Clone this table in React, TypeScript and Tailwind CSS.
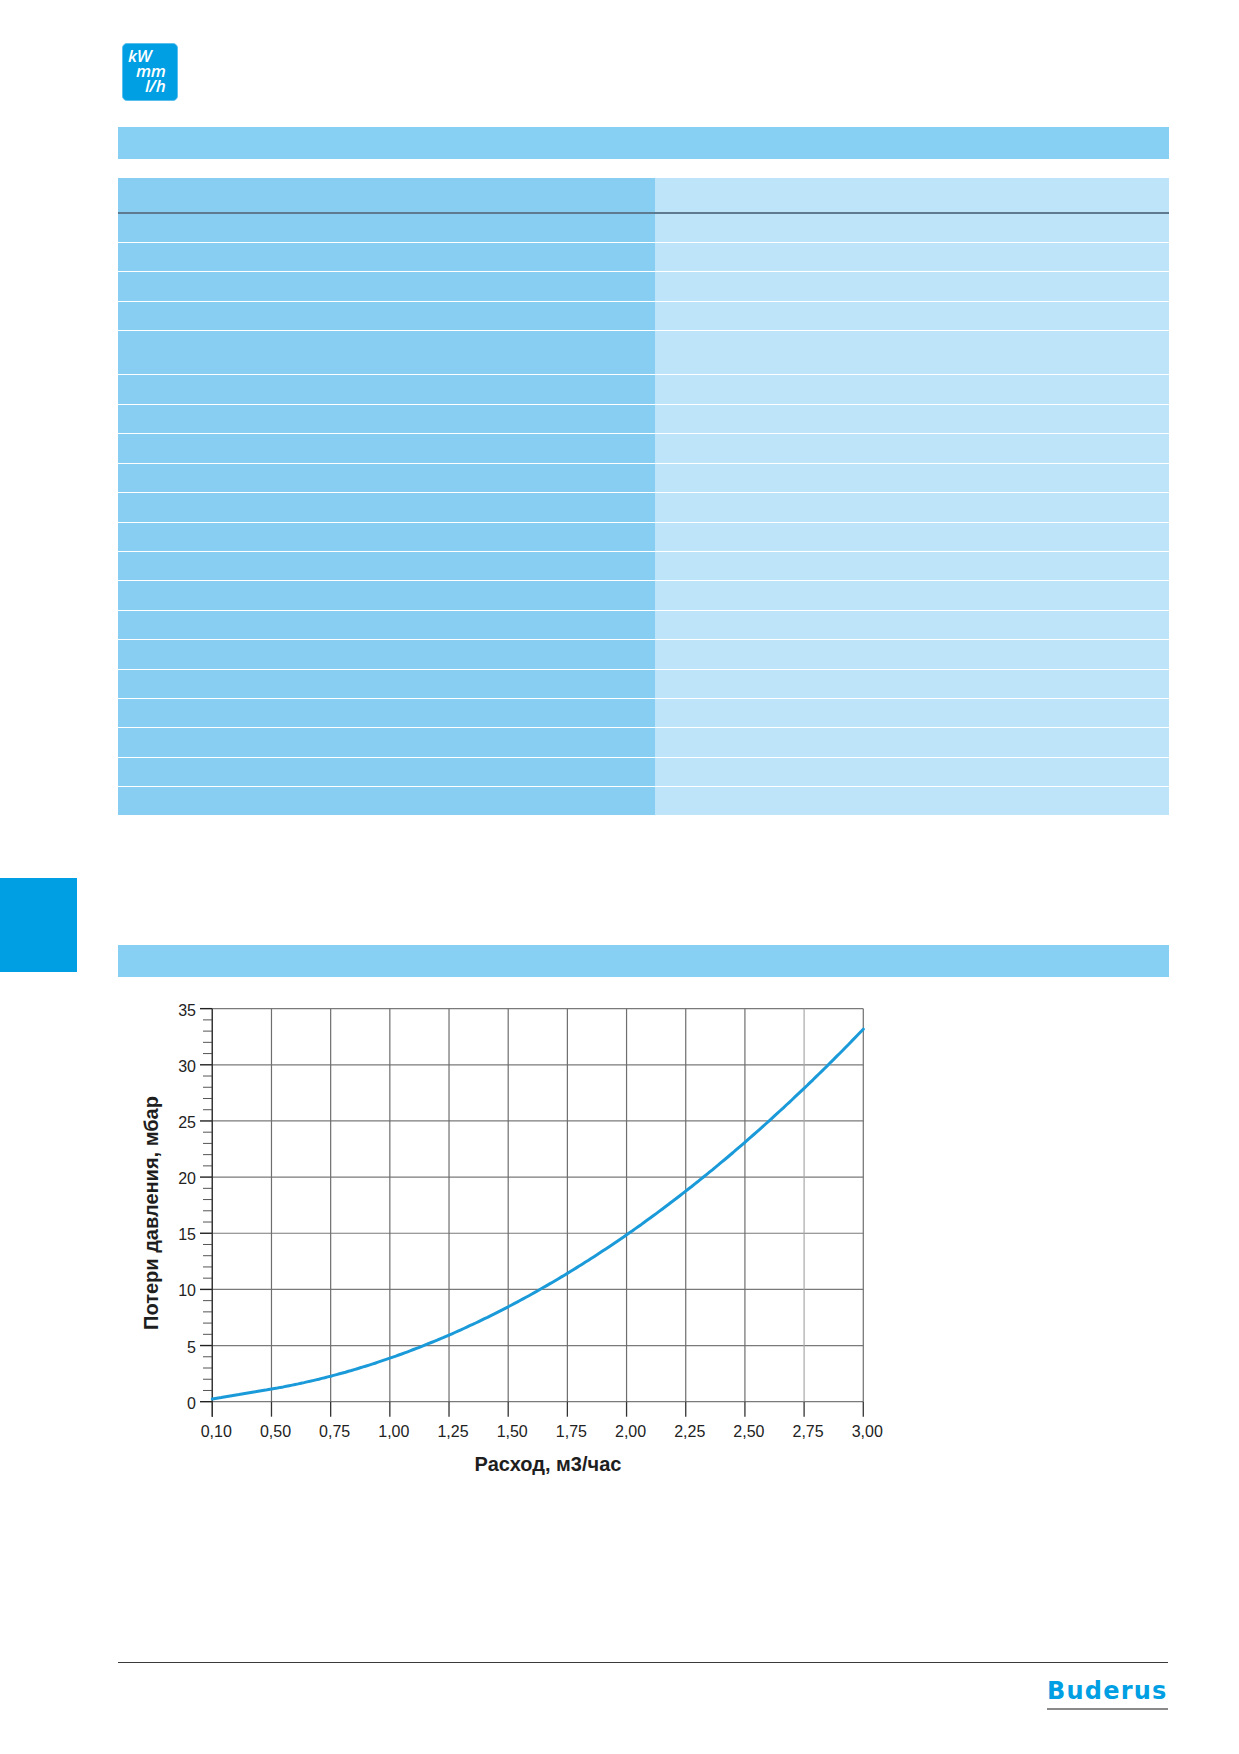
const FONT = '"Liberation Sans", Arial, sans-serif'

// body row heights of the spec table (px), top to bottom
const ROWS = [
  'h-[28px]', 'h-[28px]', 'h-[29px]', 'h-[28px]', 'h-[43px]', 'h-[29px]',
  'h-[28.4px]', 'h-[28.4px]', 'h-[28.4px]', 'h-[28.4px]', 'h-[28.4px]', 'h-[28.4px]', 'h-[28.4px]',
  'h-[28.4px]', 'h-[28.4px]', 'h-[28.4px]', 'h-[28.4px]', 'h-[28.4px]', 'h-[28.4px]', 'h-[28.4px]',
]

export default function App() {
  return (
    <div className="relative h-[1754px] w-[1239px] overflow-hidden bg-white" style={{ fontFamily: FONT }}>
      <div className="pt-[43px] pl-[122px]">
        <UnitsBadge />
      </div>

      <div className="ml-[118px] mt-[26px] h-[32px] w-[1051px] bg-[#87cff3]" />

      <SpecTable />

      <div className="flex items-start">
        <div className="mt-[63px] h-[94px] w-[77px] bg-[#009fe3]" />
        <div className="ml-[41px] mt-[130px] h-[32px] w-[1051px] bg-[#87cff3]" />
      </div>

      <PressureChart />

      <div className="ml-[118px] mt-[165px] h-px w-[1050px] bg-[#3a3a3a]" />
      <div className="ml-[1047px] mt-[16px] w-[121px]">
        <div
          className="text-[24px] font-bold leading-none tracking-[1.2px] text-[#009fe3]"
          style={{ fontFamily: '"DejaVu Sans", sans-serif' }}
        >
          Buderus
        </div>
        <div className="mt-[5px] h-[2px] w-full bg-[#8a8a8a]" />
      </div>
    </div>
  )
}

function UnitsBadge() {
  return (
    <div
      className="flex h-[58px] w-[56px] flex-col rounded-[5px] border border-[#5cc0ee] bg-[#009fe3] pt-[4px] text-[17px] font-semibold italic leading-[15px] tracking-[-0.3px] text-white"
      style={{ fontFamily: '"Open Sans", sans-serif' }}
    >
      <span className="pl-[5px]">kW</span>
      <span className="pl-[13px]">mm</span>
      <span className="pl-[22px]">l/h</span>
    </div>
  )
}

function SpecTable() {
  return (
    <div className="ml-[118px] mt-[19px] w-[1051px]">
      <div className="flex h-[34px]">
        <div className="w-[537px] bg-[#87cef2]" />
        <div className="flex-1 bg-[#bee4f9]" />
      </div>
      <div className="h-[2px] bg-[#5d7a90]" />
      <div className="flex flex-col gap-px bg-white">
        {ROWS.map((h, i) => (
          <div key={i} className={`flex ${h}`}>
            <div className="w-[537px] bg-[#87cef2]" />
            <div className="flex-1 bg-[#bee4f9]" />
          </div>
        ))}
      </div>
    </div>
  )
}

const X0 = 212.3
const XSTEP = 59.18
const Y0 = 1401.7
const YUNIT = 11.23
const X_LABELS = ['0,10', '0,50', '0,75', '1,00', '1,25', '1,50', '1,75', '2,00', '2,25', '2,50', '2,75', '3,00']

// pressure loss in mbar at grid position t (0 = 0,10 ... 11 = 3,00)
function loss(t: number) {
  if (t < 1) return 0.0375 * t * t + 0.8405 * t + 0.25
  const q = 0.25 + 0.25 * t
  return 3.662 * q * q + 0.213
}

function curvePoints() {
  const pts: string[] = []
  for (let k = 0; k <= 220; k++) {
    const t = k / 20
    pts.push(`${(X0 + t * XSTEP).toFixed(1)},${(Y0 - loss(t) * YUNIT).toFixed(1)}`)
  }
  return pts.join(' ')
}

function PressureChart() {
  const xEnd = X0 + 11 * XSTEP
  const yTop = Y0 - 35 * YUNIT
  return (
    <div className="ml-[118px] h-[520px] w-[800px]">
      <svg viewBox="118 977 800 520" width={800} height={520} fontFamily={FONT}>
        {/* horizontal grid */}
        {[0, 5, 10, 15, 20, 25, 30, 35].map((v) => (
          <line key={v} x1={X0} x2={xEnd} y1={Y0 - v * YUNIT} y2={Y0 - v * YUNIT} stroke="#7a7a7a" strokeWidth={1.2} />
        ))}
        {/* vertical grid + x ticks */}
        {X_LABELS.map((l, i) => (
          <g key={l}>
            <line x1={X0 + i * XSTEP} x2={X0 + i * XSTEP} y1={yTop} y2={Y0} stroke={i === 10 ? '#a8a8a8' : '#6e6e6e'} strokeWidth={1.2} />
            <line x1={X0 + i * XSTEP} x2={X0 + i * XSTEP} y1={Y0} y2={Y0 + 15} stroke="#333" strokeWidth={1.3} />
            <text x={X0 + i * XSTEP + 4} y={1436.5} fontSize={16} fill="#222" textAnchor="middle">{l}</text>
          </g>
        ))}
        {/* y ticks */}
        {Array.from({ length: 36 }, (_, v) => (
          <line key={v} x1={v % 5 === 0 ? 200 : 203} x2={X0} y1={Y0 - v * YUNIT} y2={Y0 - v * YUNIT} stroke={v % 5 === 0 ? '#222' : '#555'} strokeWidth={v % 5 === 0 ? 1.4 : 1} />
        ))}
        {[0, 5, 10, 15, 20, 25, 30, 35].map((v) => (
          <text key={v} x={196} y={Y0 - v * YUNIT + 7} fontSize={16} fill="#222" textAnchor="end">{v}</text>
        ))}
        <line x1={X0} x2={X0} y1={yTop} y2={Y0 + 15} stroke="#333" strokeWidth={1.3} />

        <polyline points={curvePoints()} fill="none" stroke="#1a9ad8" strokeWidth={3} strokeLinejoin="round" strokeLinecap="round" />

        <text x={158} y={1213} fontSize={20} fontWeight="bold" fill="#1e1e1e" textAnchor="middle" transform="rotate(-90 158 1213)">
          Потери давления, мбар
        </text>
        <text x={548} y={1471} fontSize={20} fontWeight="bold" fill="#1e1e1e" textAnchor="middle">
          Расход, м3/час
        </text>
      </svg>
    </div>
  )
}
